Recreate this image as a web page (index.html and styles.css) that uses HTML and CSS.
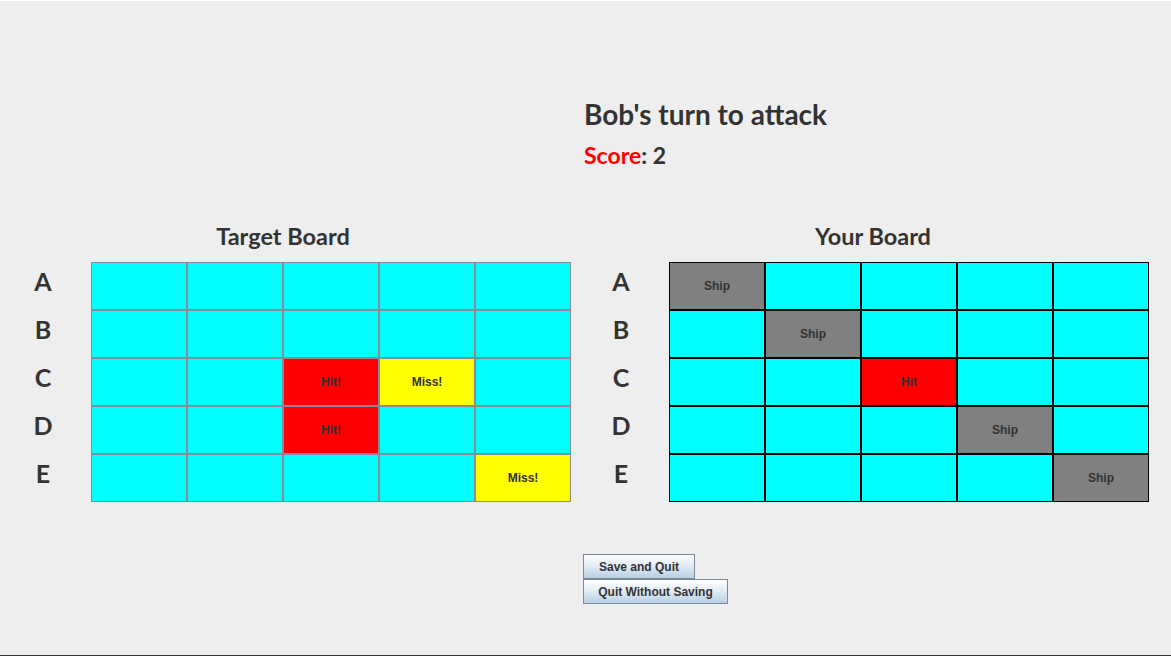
FILE: index.html
```html
<!DOCTYPE html>
<html>
<head>
<meta charset="utf-8">
<link rel="stylesheet" href="styles.css">
</head>
<body>
<div class="page">
  <div class="header">
    <div class="turn">Bob's turn to attack</div>
    <div class="score"><span class="score-label">Score</span>: 2</div>
  </div>
  <div class="titles">
    <div class="title title-left">Target Board</div>
    <div class="title title-right">Your Board</div>
  </div>
  <div class="boards">
    <div class="panel panel-left">
      <div class="labels">
        <div class="label">A</div><div class="label">B</div><div class="label">C</div><div class="label">D</div><div class="label">E</div>
      </div>
      <div class="grid target">
        <div class="cell"></div><div class="cell"></div><div class="cell"></div><div class="cell"></div><div class="cell"></div>
        <div class="cell"></div><div class="cell"></div><div class="cell"></div><div class="cell"></div><div class="cell"></div>
        <div class="cell"></div><div class="cell"></div><div class="cell hit">Hit!</div><div class="cell miss">Miss!</div><div class="cell"></div>
        <div class="cell"></div><div class="cell"></div><div class="cell hit">Hit!</div><div class="cell"></div><div class="cell"></div>
        <div class="cell"></div><div class="cell"></div><div class="cell"></div><div class="cell"></div><div class="cell miss">Miss!</div>
      </div>
    </div>
    <div class="panel panel-right">
      <div class="labels">
        <div class="label">A</div><div class="label">B</div><div class="label">C</div><div class="label">D</div><div class="label">E</div>
      </div>
      <div class="grid own">
        <div class="cell ship">Ship</div><div class="cell"></div><div class="cell"></div><div class="cell"></div><div class="cell"></div>
        <div class="cell"></div><div class="cell ship">Ship</div><div class="cell"></div><div class="cell"></div><div class="cell"></div>
        <div class="cell"></div><div class="cell"></div><div class="cell hit">Hit</div><div class="cell"></div><div class="cell"></div>
        <div class="cell"></div><div class="cell"></div><div class="cell"></div><div class="cell ship">Ship</div><div class="cell"></div>
        <div class="cell"></div><div class="cell"></div><div class="cell"></div><div class="cell"></div><div class="cell ship">Ship</div>
      </div>
    </div>
  </div>
  <div class="buttons">
    <button class="btn btn-save">Save and Quit</button>
    <button class="btn btn-quit">Quit Without Saving</button>
  </div>
</div>
</body>
</html>
```
FILE: styles.css
```css
html, body {
  margin: 0;
  padding: 0;
  background: #eeeeee;
}
.page {
  width: 1171px;
  height: 656px;
  box-sizing: border-box;
  border-top: 1px solid #ffffff;
  border-bottom: 1px solid #333333;
  background: #eeeeee;
  font-family: Lato, "Open Sans", sans-serif;
  color: #333333;
  display: flex;
  flex-direction: column;
}
.header {
  margin-left: 584px;
  padding-top: 97px;
}
.turn {
  font-size: 28px;
  font-weight: 700;
  line-height: 32px;
}
.score {
  font-size: 23px;
  font-weight: 700;
  line-height: 27px;
  margin-top: 12px;
}
.score-label {
  color: #ff0000;
}
.titles {
  display: flex;
  margin-top: 54px;
}
.title {
  font-size: 23.5px;
  font-weight: 700;
  line-height: 26px;
  text-align: center;
}
.title-left {
  width: 566px;
}
.title-right {
  width: 580px;
  margin-left: 17px;
}
.boards {
  display: flex;
  margin-top: 13px;
}
.panel {
  display: flex;
  gap: 24px;
}
.panel-left {
  margin-left: 19px;
}
.panel-right {
  margin-left: 26px;
}
.labels {
  width: 48px;
  display: flex;
  flex-direction: column;
}
.label {
  height: 48px;
  line-height: 38px;
  text-align: center;
  font-size: 25px;
  font-weight: 700;
}
.grid {
  display: grid;
  grid-template-columns: repeat(5, 96px);
  grid-template-rows: repeat(5, 48px);
}
.cell {
  box-sizing: border-box;
  background: #00ffff;
  display: flex;
  align-items: center;
  justify-content: center;
  font-family: "Liberation Sans", Arial, sans-serif;
  font-size: 12px;
  font-weight: 700;
  color: #333333;
}
.target .cell {
  border: 1px solid #8a8a96;
}
.own .cell {
  border: 1px solid #000000;
}
.hit {
  background: #ff0000;
}
.miss {
  background: #ffff00;
}
.ship {
  background: #808080;
}
.buttons {
  margin-left: 583px;
  margin-top: 52px;
  display: flex;
  flex-direction: column;
  align-items: flex-start;
}
.btn {
  box-sizing: border-box;
  height: 25px;
  padding: 0;
  white-space: nowrap;
  text-align: center;
  border: 1px solid #7a8a99;
  background: linear-gradient(to bottom, #ffffff 0%, #e4ecf5 45%, #b8cfe5 100%);
  font-family: "Liberation Sans", Arial, sans-serif;
  font-size: 12px;
  font-weight: 700;
  color: #333333;
  margin: 0;
}
.btn-save {
  width: 112px;
}
.btn-quit {
  width: 145px;
}
```
